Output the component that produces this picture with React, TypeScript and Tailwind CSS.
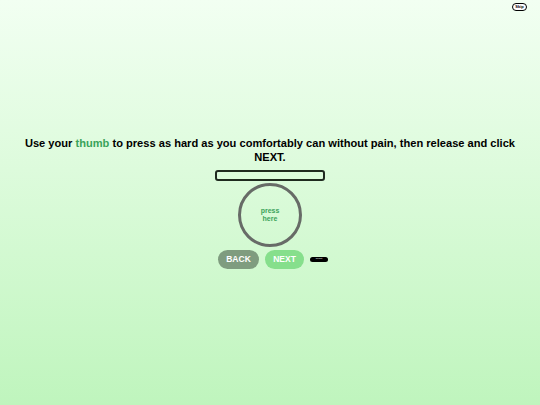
import React, { useState } from "react";

const Home = () => {
  const [pressed, setPressed] = useState(false);

  return (
    <div
      className="relative flex flex-col items-center justify-center h-[405px] w-full bg-gradient-to-b from-[#f2fff2] to-[#bff5bd] text-black"
      style={{ fontFamily: '"Liberation Sans", Arial, sans-serif' }}
    >
      <button className="absolute right-[13px] top-[3px] h-[8px] w-[15px] rounded-full border border-black bg-white text-[4px] font-bold leading-none flex items-center justify-center">
        Skip
      </button>

      <h1 className="text-[11.1px] font-bold leading-[14px] text-center w-[520px]">
        Use your <span className="text-[#3aa35a]">thumb</span> to press as hard as you comfortably can without pain, then release and click NEXT.
      </h1>

      <div className="mt-[6px] h-[11px] w-[110px] rounded-[3px] border-2 border-[#1f2a1f]" />

      <button
        onMouseDown={() => setPressed(true)}
        onMouseUp={() => setPressed(false)}
        className={`mt-[2px] flex h-[64px] w-[64px] flex-col items-center justify-center rounded-full border-[3px] border-[#676b67] text-[7px] font-bold leading-[8px] text-[#3aa35a] ${pressed ? "bg-[#d0f5cf]" : ""}`}
      >
        <span>press</span>
        <span>here</span>
      </button>

      <div className="mt-[3px] flex items-center gap-[6px] pl-[6px]">
        <button className="h-[19px] w-[41px] rounded-full bg-[#7f9c7f] text-[8.5px] font-bold text-white">BACK</button>
        <button className="h-[19px] w-[39px] rounded-full bg-[#86df8c] text-[8.5px] font-bold text-white">NEXT</button>
        <button className="h-[5px] w-[18px] rounded-full bg-black text-[2.5px] leading-none text-white">Reset</button>
      </div>
    </div>
  );
};

export default Home;
